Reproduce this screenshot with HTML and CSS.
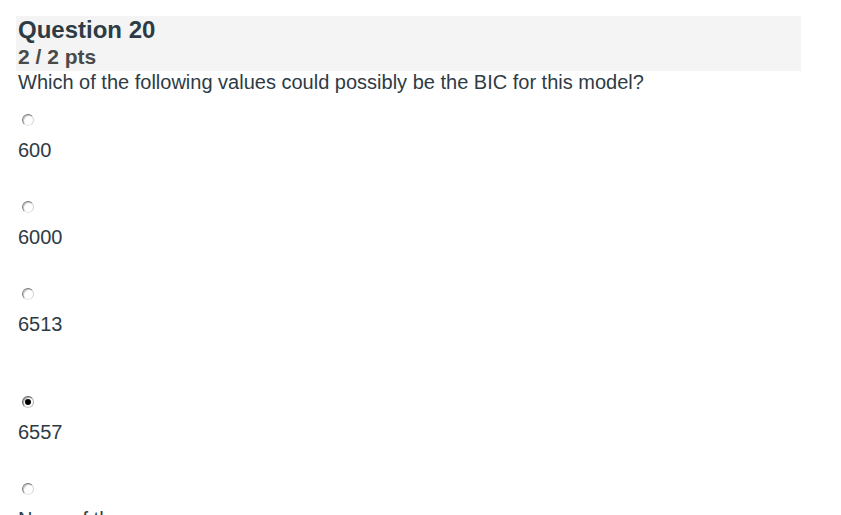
FILE: index.html
```html
<!DOCTYPE html>
<html lang="en">
<head>
<meta charset="utf-8">
<title>Question 20</title>
<link rel="stylesheet" href="styles.css">
</head>
<body>
<div class="quiz">
  <div class="header">
    <div class="title">Question 20</div>
    <div class="pts">2 / 2 pts</div>
  </div>
  <div class="prompt">Which of the following values could possibly be the BIC for this model?</div>
  <div class="answers">
    <div class="answer">
      <span class="radio"></span>
      <div class="label">600</div>
    </div>
    <div class="answer">
      <span class="radio"></span>
      <div class="label">6000</div>
    </div>
    <div class="answer answer-tall">
      <span class="radio"></span>
      <div class="label">6513</div>
    </div>
    <div class="answer">
      <span class="radio radio-checked"></span>
      <div class="label">6557</div>
    </div>
    <div class="answer">
      <span class="radio"></span>
      <div class="label">None of them</div>
    </div>
  </div>
</div>
</body>
</html>
```

FILE: styles.css
```css
html, body {
  margin: 0;
  padding: 0;
  background: #ffffff;
}

.quiz {
  padding: 16px;
  font-family: "Liberation Sans", Arial, sans-serif;
  color: #2d3b45;
}

.header {
  width: 785px;
  box-sizing: border-box;
  padding: 0 2px;
  background: #f4f4f4;
}

.title {
  font-weight: 700;
  font-size: 24px;
  line-height: 27px;
  color: #2d3b45;
}

.pts {
  font-weight: 700;
  font-size: 21px;
  line-height: 28px;
  color: #4a4a4a;
}

.prompt {
  font-size: 20px;
  line-height: 23px;
  padding: 0 2px;
}

.answers {
  padding: 0 2px;
}

.answer {
  display: flex;
  flex-direction: column;
  align-items: flex-start;
  margin-top: 39px;
}

.answer:first-child {
  margin-top: 20px;
}

.answer-tall {
  padding-bottom: 21px;
}

.radio {
  display: block;
  box-sizing: border-box;
  width: 12px;
  height: 12px;
  margin-left: 4px;
  border-radius: 50%;
  border: 1px solid;
  border-color: #7a7a7a #d4d4d4 #e6e6e6 #858585;
  box-shadow: inset 1px 1px 0 #c4c4c4;
  background: #ffffff;
  position: relative;
}

.radio-checked {
  border-color: #5a5a5a #b0b0b0 #c8c8c8 #666666;
  box-shadow: inset 1px 1px 0 #a8a8a8;
}

.radio-checked::after {
  content: "";
  position: absolute;
  left: 2px;
  top: 2px;
  width: 6px;
  height: 6px;
  border-radius: 50%;
  background: #000000;
}

.label {
  margin-top: 12px;
  font-size: 20px;
  line-height: 24px;
}
```
